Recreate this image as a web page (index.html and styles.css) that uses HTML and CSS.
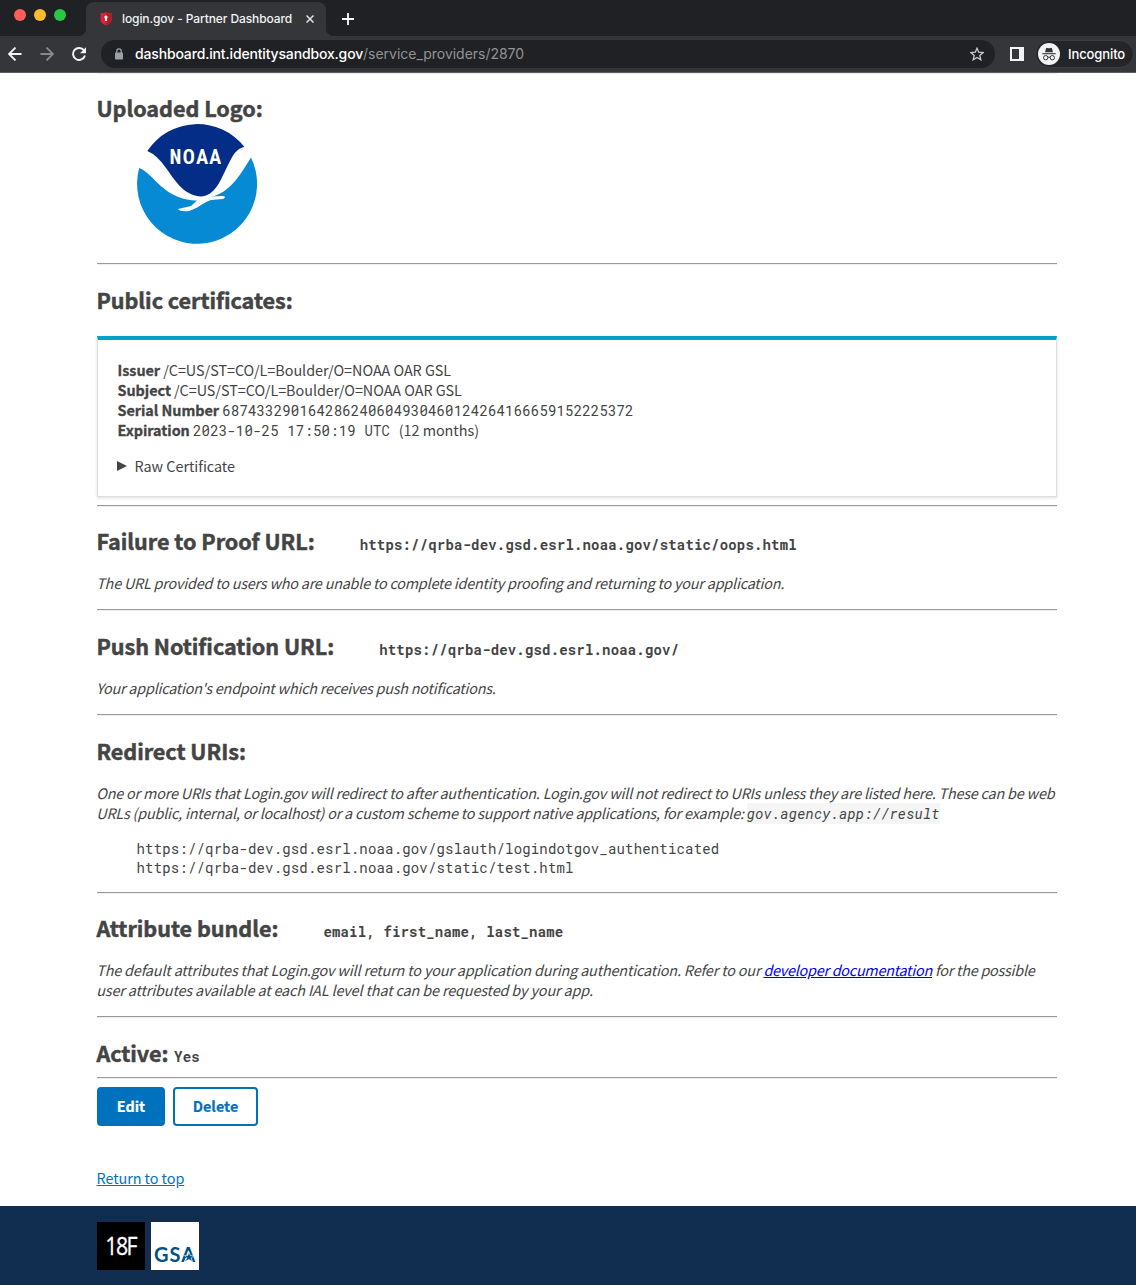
FILE: index.html
```html
<!DOCTYPE html>
<html lang="en">
<head>
<meta charset="utf-8">
<title>login.gov - Partner Dashboard</title>
<link rel="stylesheet" href="styles.css">
</head>
<body>
<header class="browser">
  <div class="tabs">
    <div class="lights"><i class="red"></i><i class="yellow"></i><i class="green"></i></div>
    <div class="tab">
      <svg class="shield" width="12" height="14" viewBox="0 0 12 14"><path d="M.5 1.200Q4 1.200 6 .3q2 .9 5.500.9V8q0 3-5.500 5.500Q.5 11 .5 8Z" fill="#e21d3f"/><path d="M6 .3q2 .9 5.500.9V8q0 3-5.500 5.500Z" fill="#b51d20"/><circle cx="6" cy="5" r="1.600" fill="#fff"/><path d="M5.200 5h1.600l.3 4H4.900Z" fill="#fff"/></svg>
      <span class="tab-title">login.gov - Partner Dashboard</span>
      <svg class="close" width="8" height="8" viewBox="0 0 8 8"><path d="m.5.5 7 7m0-7-7 7" stroke="#e3e4e6" stroke-width="1.500"/></svg>
    </div>
    <svg class="plus" width="12" height="12" viewBox="0 0 12 12"><path d="M6 0v12M0 6h12" stroke="#fff" stroke-width="1.800"/></svg>
  </div>
  <div class="toolbar">
    <svg class="nav" width="14" height="14" viewBox="0 0 14 14"><path d="M13.500 7H1M7.500 .5 1 7l6.500 6.500" fill="none" stroke="#f5f5f6" stroke-width="1.800"/></svg>
    <svg class="nav forward" width="14" height="14" viewBox="0 0 14 14"><path d="M.5 7H13M6.500 .5 13 7l-6.500 6.500" fill="none" stroke="#88898c" stroke-width="1.800"/></svg>
    <svg class="nav reload" width="14" height="14" viewBox="0 0 14 14"><path d="M12 3.500A6 6 0 1 0 12.900 8.500" fill="none" stroke="#f5f5f6" stroke-width="1.900"/><path d="M14 .3V6.200H8Z" fill="#f5f5f6"/></svg>
    <div class="address">
      <svg class="lock" width="8" height="12" viewBox="0 0 8 12"><path d="M1.800 5V3a2.200 2.200 0 0 1 4.400 0v2" fill="none" stroke="#9aa0a6" stroke-width="1.300"/><rect y="4.500" width="8" height="7" rx=".8" fill="#9aa0a6"/></svg>
      <span class="url"><b>dashboard.int.identitysandbox.gov</b><span class="path">/service_providers/2870</span></span>
      <svg class="star" width="14" height="14" viewBox="0 0 14 14"><path d="m7 1.200 1.700 4 4.400.4-3.300 2.900 1 4.300L7 10.500l-3.800 2.300 1-4.300L.9 5.600l4.400-.4Z" fill="none" stroke="#c8cacd" stroke-width="1.300"/></svg>
    </div>
    <svg class="panel" width="14" height="14" viewBox="0 0 14 14"><path d="M0 0h14v14H0ZM2 2v10h7V2Z" fill="#f1f3f4" fill-rule="evenodd"/></svg>
    <div class="incognito">
      <svg width="22" height="22" viewBox="0 0 22 22"><circle cx="11" cy="11" r="11" fill="#f1f3f4"/><path d="M7 9.200 8 5.500q.2-.8 1-.6l2 .4 2-.4q.8-.2 1 .6l1 3.700Z" fill="#333539"/><path d="M4.300 10.700h13.400" stroke="#333539" stroke-width="1.100"/><g fill="none" stroke="#333539" stroke-width="1"><circle cx="7.700" cy="14.700" r="2.200"/><circle cx="14.300" cy="14.700" r="2.200"/><path d="M9.900 14.400q1.100-.7 2.200 0"/></g></svg>
      <span>Incognito</span>
    </div>
  </div>
</header>
<main class="content">
  <section class="logo-section">
    <h2><span>Uploaded Logo:</span></h2>
    <svg class="noaa" width="120" height="120" viewBox="0 0 120 120">
      <path d="M10.300 27A60 60 0 0 1 107.500 23C101 24 97 29 93 37 84 54 81 67 69 71.500Q64 73 60 72C44 68 38 56 29 44Q20 31 10.300 27Z" fill="#032d86"/>
      <path d="M2.200 44A60 60 0 1 0 114 33.500C104 50 95 64 82 70Q77 72.500 74 72.500L86 72Q90 73 86 75L74 76C65 79 60 85 52 87Q43 88 41 85L54 82 60 76.500C49 77 35 72 25 63 15 54 10 47 2.200 44Z" fill="#058ad3"/>
      <text class="noaa-name" x="32.500" y="40">NOAA</text>
    </svg>
  </section>
  <section class="cert-section">
    <h2><span>Public certificates:</span></h2>
    <div class="card">
      <div><b>Issuer</b> /C=US/ST=CO/L=Boulder/O=NOAA OAR GSL</div>
      <div><b>Subject</b> /C=US/ST=CO/L=Boulder/O=NOAA OAR GSL</div>
      <div><b>Serial Number</b> <code>687433290164286240604930460124264166659152225372</code></div>
      <div><b>Expiration</b> <code>2023-10-25 17:50:19 UTC </code>(12 months)</div>
      <div class="raw"><svg width="10" height="10" viewBox="0 0 10 10"><path d="M0 0v10l10-5Z" fill="#444"/></svg><span>Raw Certificate</span></div>
    </div>
  </section>
  <section class="tight">
    <h2><span>Failure to Proof URL:</span><code>https://qrba-dev.gsd.esrl.noaa.gov/static/oops.html</code></h2>
    <p class="p1">The URL provided to users who are unable to complete identity proofing and returning to your application.</p>
  </section>
  <section>
    <h2><span>Push Notification URL:</span><code>https://qrba-dev.gsd.esrl.noaa.gov/</code></h2>
    <p class="p2">Your application's endpoint which receives push notifications.</p>
  </section>
  <section class="redirect">
    <h2><span>Redirect URIs:</span></h2>
    <p><span class="p3">One or more URIs that Login.gov will redirect to after authentication. Login.gov will not redirect to URIs unless they are listed here. These can be web</span><br><span class="p4">URLs (public, internal, or localhost) or a custom scheme to support native applications, for example: </span><code>gov.agency.app://result</code></p>
    <pre>https://qrba-dev.gsd.esrl.noaa.gov/gslauth/logindotgov_authenticated
https://qrba-dev.gsd.esrl.noaa.gov/static/test.html</pre>
  </section>
  <section class="tight">
    <h2><span>Attribute bundle:</span><code>email, first_name, last_name</code></h2>
    <p><span class="p5">The default attributes that Login.gov will return to your application during authentication. Refer to our <a href="#docs">developer documentation</a> <span class="p5-end">for the possible</span></span><br><span class="p6">user attributes available at each IAL level that can be requested by your app.</span></p>
  </section>
  <section class="active">
    <h2><span>Active:</span><code>Yes</code></h2>
  </section>
  <div class="actions"><button class="edit">Edit</button><button class="delete">Delete</button></div>
  <a class="top-link" href="#top">Return to top</a>
</main>
<footer>
  <div class="mark mark18"><span>18F</span></div>
  <div class="mark markgsa"><span>GSA</span><svg width="12" height="10" viewBox="0 0 12 10"><path d="m6 0 1.300 3.600H11L8.200 5.800 9.300 9.500 6 7.400 1.500 9.800 4 5.900 1.400 3.600h3.300Z" fill="#005288" stroke="#fff" stroke-width=".6"/></svg></div>
</footer>
</body>
</html>
```
FILE: styles.css
```css
* { box-sizing: border-box; }
body {
  margin: 0;
  width: 1136px;
  height: 1285px;
  overflow: hidden;
  display: flex;
  flex-direction: column;
  background: #fff;
  color: #444;
  font: 14.4px/20px "Noto Sans CJK SC", sans-serif;
}
svg { display: block; flex: none; }
.browser { height: 73px; flex: none; background: #35363a; border-bottom: 1px solid #5b5c5f; font-family: Inter, sans-serif; }
.tabs { height: 36px; display: flex; background: #202124; }
.lights { width: 86px; padding: 9px 0 0 14px; display: flex; gap: 8px; }
.lights i { width: 12px; height: 12px; border-radius: 50%; }
.red { background: #ff5f57; }
.yellow { background: #febc2e; }
.green { background: #28c840; }
.tab { position: relative; width: 240px; height: 34px; margin-top: 2px; display: flex; align-items: center; padding: 0 12px 0 14px; background: #35363a; border-radius: 8px 8px 0 0; color: #f1f3f4; }
.tab::before, .tab::after { content: ""; position: absolute; bottom: 0; width: 8px; height: 8px; }
.tab::before { left: -8px; background: radial-gradient(circle at 0 0, transparent 8px, #35363a 8.5px); }
.tab::after { right: -8px; background: radial-gradient(circle at 100% 0, transparent 8px, #35363a 8.5px); }
.tab-title { margin-left: 10px; font-size: 12px; font-weight: 500; white-space: nowrap; letter-spacing: -.1px; }
.close { margin-left: auto; }
.plus { margin: 13px 0 0 16px; }
.toolbar { height: 36px; display: flex; align-items: center; padding-left: 8px; }
.forward { margin-left: 18px; }
.reload { margin-left: 18px; }
.address { width: 894px; height: 28px; margin-left: 15px; padding: 0 11px 0 14px; display: flex; align-items: center; border-radius: 14px; background: #202124; }
.url { margin-left: 12px; color: #9aa0a6; font-size: 14px; white-space: nowrap; }
.url b { color: #fff; font-weight: 500; letter-spacing: -.16px; }
.path { color: #929397; letter-spacing: -.02px; }
.star { margin-left: auto; }
.panel { margin-left: 15px; }
.incognito { width: 99px; height: 28px; margin-left: 11px; padding-left: 2px; display: flex; align-items: center; gap: 8px; border-radius: 14px; background: #242529; border: 1px solid #3d3e42; color: #fff; font-size: 13px; font-weight: 500; letter-spacing: -.1px; }
.content { width: 960px; height: 1133px; margin-left: 97px; flex: none; display: flex; flex-direction: column; align-items: flex-start; border-top: 1px solid #eee; }
section { width: 960px; padding: 23px 0 17px; border-bottom: 1px solid #eee; box-shadow: inset 0 -1px #9a9a9a; }
section.tight { padding-top: 22px; }
h2 { margin: 0 0 0 -.6px; height: 24px; display: flex; align-items: baseline; font-size: 21.6px; line-height: 24px; white-space: nowrap; letter-spacing: -.04px; }
h2 span { -webkit-text-stroke: .5px; }
.card b { -webkit-text-stroke: .3px; }
p { margin: 20px 0 0 -.8px; font-style: italic; white-space: nowrap; }
.p1 { letter-spacing: -.212px; }
.p2 { letter-spacing: -.22px; }
.p3 { letter-spacing: -.196px; }
.p4 { letter-spacing: -.188px; }
.p5 { letter-spacing: -.163px; }
.p5 a { letter-spacing: -.26px; }
.p5-end { letter-spacing: -.25px; }
.p6 { letter-spacing: -.135px; }
code, pre { font-family: "Roboto Mono", "DejaVu Sans Mono", monospace; font-size: 14px; letter-spacing: .17px; line-height: 1; }
h2 code { margin-left: 45px; }
section.logo-section { height: 191px; padding-top: 22px; }
.noaa { margin: 4px 0 0 40px; }
.noaa-name { font: bold 20px "Roboto Mono", monospace; fill: #fff; letter-spacing: 1.2px; }
section.cert-section { padding-bottom: 9px; }
.card { margin-top: 24px; width: 960px; height: 161px; padding: 20px 20px 0 19.5px; border: 1px solid #dcdee0; border-top: 4px solid #00a1c7; box-shadow: 0 1px 3px rgba(0,0,0,.14); white-space: nowrap; letter-spacing: -.035px; }
.raw { margin: 16px 0 0 -.5px; display: flex; align-items: center; gap: 7.5px; }
p code { background: #f5f5f5; padding: 1px 0; border-radius: 2px; }
pre { margin: 16px 0 0 39.5px; line-height: 19px; }
section.redirect { padding-bottom: 16px; }
p a { color: #0000ee; text-decoration: underline; }
section.active { padding-bottom: 13px; }
.active h2 code { margin-left: 5.5px; }
.actions { margin-top: 8px; display: flex; gap: 8px; }
button { height: 39px; padding: 0 0 2px; border: 2px solid #0071bc; border-radius: 4px; font: bold 14.4px/20px "Noto Sans CJK SC", sans-serif; -webkit-text-stroke: .2px; }
.edit { width: 68px; background: #0071bc; color: #fff; }
.delete { width: 85px; background: #fff; color: #0071bc; }
.top-link { margin: 42px 0 0 -.5px; color: #0071bc; letter-spacing: -.06px; }
footer { height: 79px; flex: none; padding: 16px 0 0 97px; display: flex; gap: 6px; background: #112e51; }
.mark { position: relative; width: 48px; height: 48px; display: flex; justify-content: center; white-space: nowrap; }
.mark18 { background: #000; color: #fff; font: 26px/47px "Open Sans", sans-serif; letter-spacing: -2px; }
.mark18 span { transform: scaleX(.82); -webkit-text-stroke: .3px; }
.markgsa { background: #fff; color: #005288; font: bold 20px/64px Lato, sans-serif; letter-spacing: 1px; }
.markgsa svg { position: absolute; left: 32px; top: 30px; }
```
